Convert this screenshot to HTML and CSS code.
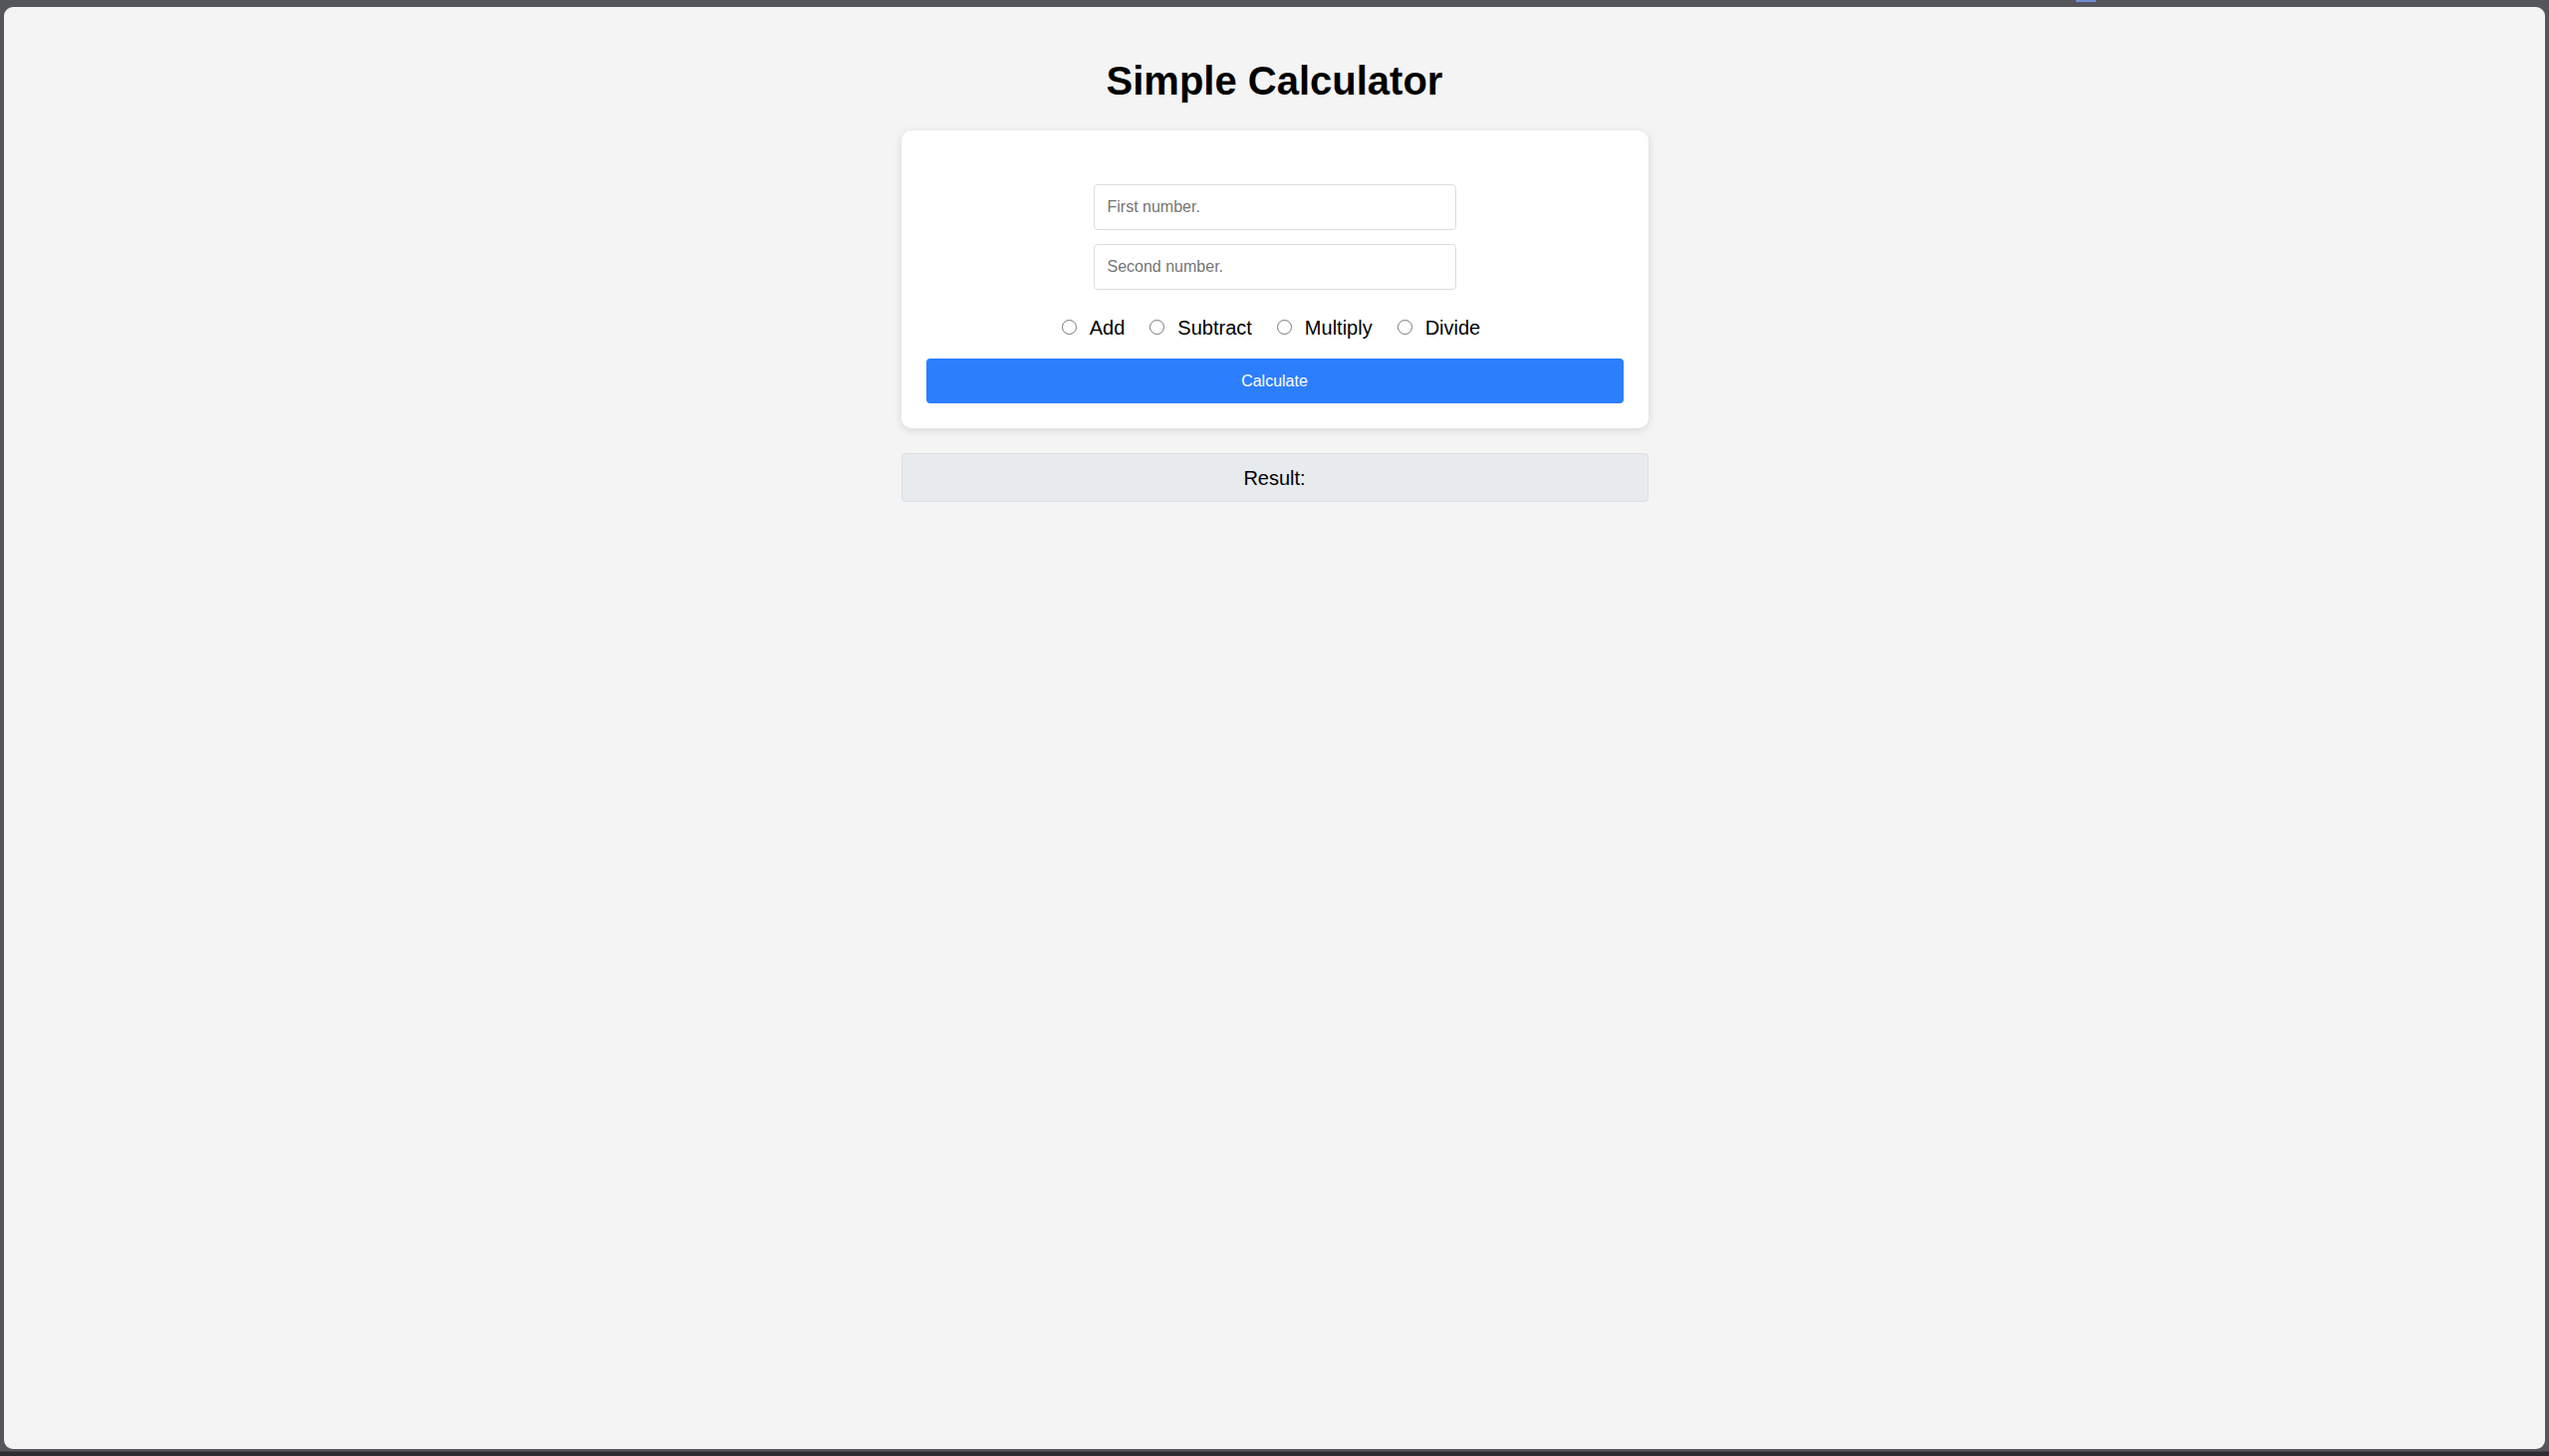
FILE: index.html
```html
<!DOCTYPE html>
<html lang="en">
<head>
<meta charset="utf-8">
<title>Simple Calculator</title>
<link rel="stylesheet" href="styles.css">
</head>
<body>
<div class="top-mark"></div>
<div class="window">
  <h1 class="title">Simple Calculator</h1>
  <div class="card">
    <div class="fields">
      <input class="num" type="text" placeholder="First number.">
      <input class="num" type="text" placeholder="Second number.">
    </div>
    <div class="ops">
      <label class="op"><input type="radio" name="op" class="radio"><span>Add</span></label>
      <label class="op"><input type="radio" name="op" class="radio"><span>Subtract</span></label>
      <label class="op"><input type="radio" name="op" class="radio"><span>Multiply</span></label>
      <label class="op"><input type="radio" name="op" class="radio"><span>Divide</span></label>
    </div>
    <button class="calc" type="button">Calculate</button>
  </div>
  <div class="result">Result:</div>
</div>
</body>
</html>
```
FILE: styles.css
```css
html, body {
  margin: 0;
  padding: 0;
}
body {
  width: 2559px;
  height: 1462px;
  box-sizing: border-box;
  padding: 7px 4px 7px 4px;
  background: linear-gradient(to bottom, #55565b 0, #55565b 1457px, #2e2e32 1458px, #2e2e32 100%);
  font-family: "Liberation Sans", Arial, sans-serif;
  position: relative;
  overflow: hidden;
}
.top-mark {
  position: absolute;
  left: 2084px;
  top: 0;
  width: 20px;
  height: 2px;
  background: #6f8fd2;
}
.window {
  height: 100%;
  background: #f4f4f4;
  border-radius: 9px;
  display: flex;
  flex-direction: column;
  align-items: center;
}
.title {
  margin: 51px 0 27px;
  font-size: 40px;
  font-weight: bold;
  line-height: 46px;
  color: #000;
}
.card {
  width: 750px;
  box-sizing: border-box;
  background: #fff;
  border-radius: 10px;
  box-shadow: 0 2px 8px rgba(0, 0, 0, 0.12);
  padding: 54px 25px 25px;
  display: flex;
  flex-direction: column;
  align-items: center;
}
.fields {
  display: flex;
  flex-direction: column;
  gap: 14px;
}
.num {
  width: 364px;
  height: 46px;
  box-sizing: border-box;
  border: 1px solid #dcdcdc;
  border-radius: 4px;
  padding: 0 13px;
  font-family: "Liberation Sans", Arial, sans-serif;
  font-size: 16px;
  color: #000;
  background: #fff;
  outline: none;
}
.num::placeholder {
  color: #757575;
}
.ops {
  margin-top: 27px;
  display: flex;
  align-items: center;
  gap: 25px;
  height: 23px;
  margin-right: 7px;
}
.op {
  display: flex;
  align-items: center;
  gap: 13px;
  font-size: 20px;
  line-height: 23px;
  color: #000;
}
.radio {
  appearance: none;
  -webkit-appearance: none;
  margin: 0;
  width: 15px;
  height: 15px;
  border: 1px solid #767676;
  border-radius: 50%;
  background: #fff;
  position: relative;
  top: -1px;
}
.calc {
  margin-top: 19px;
  width: 700px;
  height: 45px;
  border: none;
  border-radius: 4px;
  background: #2c7efc;
  color: #fff;
  font-family: "Liberation Sans", Arial, sans-serif;
  font-size: 16px;
}
.result {
  margin-top: 25px;
  width: 750px;
  height: 49px;
  box-sizing: border-box;
  padding-top: 2px;
  background: #e8ebee;
  border: 1px solid #dcdfe3;
  border-radius: 4px;
  display: flex;
  align-items: center;
  justify-content: center;
  font-size: 20px;
  color: #000;
}
```
